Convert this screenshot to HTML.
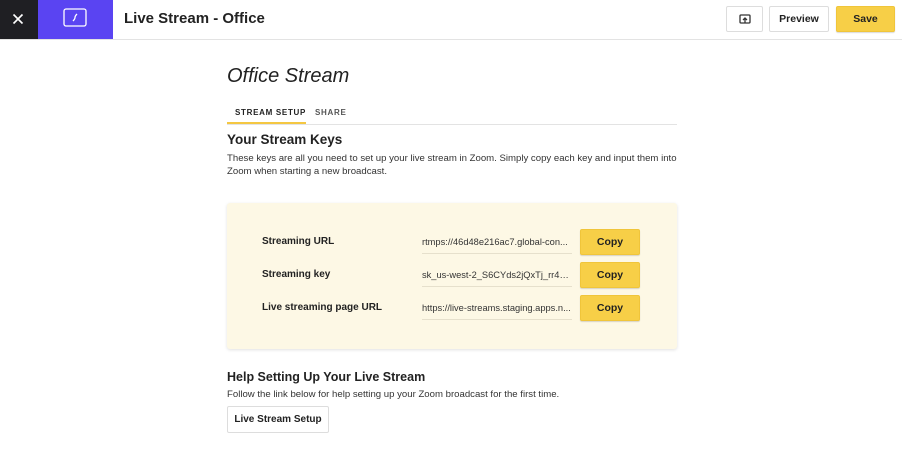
<!DOCTYPE html><html><head><style>
*{box-sizing:border-box;margin:0;padding:0}
body{width:902px;height:470px;background:#fff;font-family:"Liberation Sans",sans-serif;color:#222;position:relative;overflow:hidden}
.a{position:absolute;white-space:nowrap}
.btn{position:absolute;border:1px solid #ddd;border-radius:2px;background:#fff;font-size:10.5px;font-weight:bold;display:flex;align-items:center;justify-content:center;color:#222}
.y{background:#f7cf47;border-color:#f0c53a;box-shadow:0 1px 1px rgba(0,0,0,.15)}
.lab{font-size:10px;font-weight:bold;left:262px}
.val{left:422px;width:150px;font-size:9.3px;color:#333;border-bottom:1px solid #e6e0cc;height:20px;line-height:16px;overflow:hidden;text-overflow:ellipsis}
</style></head><body>
<div class="a" style="left:0;top:0;width:38px;height:39px;background:#1f1f23"></div>
<svg class="a" style="left:12px;top:13px" width="12" height="12"><path d="M1.5 1.5L10.5 10.5M10.5 1.5L1.5 10.5" stroke="#fff" stroke-width="1.6"/></svg>
<div class="a" style="left:38px;top:0;width:75px;height:39px;background:#5a44f2"></div>
<svg class="a" style="left:63px;top:8px" width="24" height="20"><rect x="1" y="1" width="22" height="17" rx="2" fill="none" stroke="#fff" stroke-width="1.3"/><path d="M10 13Q12 11 12 9.5T14 6" stroke="#fff" stroke-width="1.3" fill="none"/></svg>
<div class="a" style="left:124px;top:10px;font-size:15px;font-weight:bold;color:#222">Live Stream - Office</div>
<div class="a" style="left:0;top:39px;width:902px;height:1px;background:#e3e3e3"></div>
<div class="btn" style="left:726px;top:6px;width:37px;height:26px"><svg width="12" height="11"><rect x="1" y="1" width="10" height="8" rx="1" fill="none" stroke="#333" stroke-width="1.3"/><path d="M6 9V4M4 6L6 4L8 6" stroke="#333" stroke-width="1.3" fill="none"/></svg></div>
<div class="btn" style="left:769px;top:6px;width:60px;height:26px">Preview</div>
<div class="btn y" style="left:836px;top:6px;width:59px;height:26px">Save</div>
<div class="a" style="left:227px;top:65px;font-size:20px;font-style:italic;color:#222">Office Stream</div>
<div class="a" style="left:235px;top:108px;font-size:8px;font-weight:bold;letter-spacing:.7px">STREAM SETUP</div>
<div class="a" style="left:315px;top:108px;font-size:8px;font-weight:bold;letter-spacing:.7px;color:#555">SHARE</div>
<div class="a" style="left:227px;top:124px;width:450px;height:1px;background:#e3e3e3"></div>
<div class="a" style="left:227px;top:122px;width:79px;height:2px;background:#f4c742"></div>
<div class="a" style="left:227px;top:132px;font-size:13.5px;font-weight:bold">Your Stream Keys</div>
<div class="a" style="left:227px;top:152px;font-size:9.6px;line-height:13px;color:#333">These keys are all you need to set up your live stream in Zoom. Simply copy each key and input them into<br>Zoom when starting a new broadcast.</div>
<div class="a" style="left:227px;top:203px;width:450px;height:146px;background:#fdf8e5;border-radius:3px;box-shadow:0 1px 3px rgba(0,0,0,.12)"></div>
<div class="a lab" style="top:236px">Streaming URL</div>
<div class="a lab" style="top:269px">Streaming key</div>
<div class="a lab" style="top:302px">Live streaming page URL</div>
<div class="a val" style="top:234px">rtmps://46d48e216ac7.global-con...</div>
<div class="a val" style="top:267px">sk_us-west-2_S6CYds2jQxTj_rr40...</div>
<div class="a val" style="top:300px">https://live-streams.staging.apps.n...</div>
<div class="btn y" style="left:580px;top:229px;width:60px;height:26px">Copy</div>
<div class="btn y" style="left:580px;top:262px;width:60px;height:26px">Copy</div>
<div class="btn y" style="left:580px;top:295px;width:60px;height:26px">Copy</div>
<div class="a" style="left:227px;top:370px;font-size:12.5px;font-weight:bold">Help Setting Up Your Live Stream</div>
<div class="a" style="left:227px;top:389px;font-size:9.6px;color:#333">Follow the link below for help setting up your Zoom broadcast for the first time.</div>
<div class="btn" style="left:227px;top:406px;width:102px;height:27px;font-size:10px">Live Stream Setup</div>
</body></html>
